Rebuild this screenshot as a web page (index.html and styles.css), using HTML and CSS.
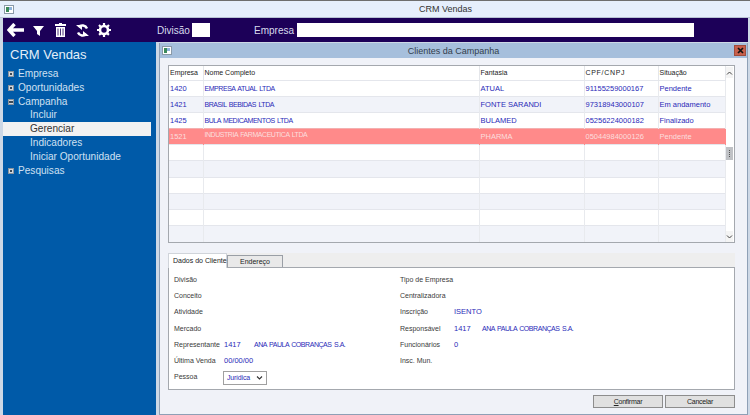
FILE: index.html
```html
<!DOCTYPE html>
<html lang="pt-BR">
<head>
<meta charset="utf-8">
<title>CRM Vendas</title>
<link rel="stylesheet" href="styles.css">
</head>
<body>
<div class="app">
  <header class="titlebar">
    <svg class="winicon" viewBox="0 0 10 9"><rect x=".5" y=".5" width="9" height="8" fill="#fff" stroke="#8a9aa8"/><rect x="2" y="2" width="3" height="5" fill="#3c8a5a"/><rect x="5" y="2" width="3" height="3" fill="#8fb4dc"/></svg>
    <span class="titlebar-text">CRM Vendas</span>
  </header>
  <div class="toolbar">
    <div class="tools">
      <svg class="tool-back" viewBox="0 0 17 14"><path d="M7.500 1 2 7l5.500 6M3 7h14" fill="none" stroke="#fff" stroke-width="3.400"/></svg>
      <svg class="tool-filter" viewBox="0 0 11 11"><path d="M0 1h11L7 6v5L4 9V6z" fill="#fff"/></svg>
      <svg class="tool-trash" viewBox="0 0 11 14"><path d="M4 0h3v1h4v2H0V1h4zM1 4h9v10H1z" fill="#fff"/><path d="M3 5.500v7M5.500 5.500v7M8 5.500v7" stroke="#1c0058" stroke-width=".8"/></svg>
      <svg class="tool-sync" viewBox="0 0 13 13"><path d="M11 4.500A5 4.500 0 0 0 2.500 3M2 8.500A5 4.500 0 0 0 10.500 10" fill="none" stroke="#fff" stroke-width="2.400"/><path d="M0 1h6v5zM13 12H7V7z" fill="#fff"/></svg>
      <svg class="tool-gear" viewBox="0 0 14 14"><circle cx="7" cy="7" r="4" fill="none" stroke="#fff" stroke-width="2.600"/><path d="M7 0v14M0 7h14M2 2l10 10M12 2 2 12" stroke="#fff" stroke-width="2.200" stroke-dasharray="2.400 9.200"/></svg>
    </div>
    <span class="tb-label tb-div">Divisão</span>
    <span class="tb-input tb-input-div"></span>
    <span class="tb-label tb-emp">Empresa</span>
    <span class="tb-input tb-input-emp"></span>
  </div>
  <div class="main">
    <nav class="sidebar">
      <h1 class="side-title">CRM Vendas</h1>
      <ul class="tree">
        <li class="node"><i class="box plus"></i>Empresa</li>
        <li class="node"><i class="box plus"></i>Oportunidades</li>
        <li class="node"><i class="box minus"></i>Campanha</li>
        <li class="leaf">Incluir</li>
        <li class="leaf active">Gerenciar</li>
        <li class="leaf">Indicadores</li>
        <li class="leaf">Iniciar Oportunidade</li>
        <li class="node"><i class="box plus"></i>Pesquisas</li>
      </ul>
    </nav>
    <section class="dialog">
      <header class="dlg-head">
        <svg class="winicon" viewBox="0 0 10 9"><rect x=".5" y=".5" width="9" height="8" fill="#fff" stroke="#8a9aa8"/><rect x="2" y="2" width="3" height="5" fill="#3c8a5a"/><rect x="5" y="2" width="3" height="3" fill="#8fb4dc"/></svg>
        <span class="dlg-title">Clientes da Campanha</span>
        <span class="dlg-close"><svg viewBox="0 0 7 7"><path d="M1 1l5 5M6 1 1 6" stroke="#111" stroke-width="1.700"/></svg></span>
      </header>
      <div class="dlg-body">
        <div class="grid-wrap">
          <table class="grid">
            <colgroup><col class="c1"><col class="c2"><col class="c3"><col class="c4"><col class="c5"></colgroup>
            <thead><tr><th>Empresa</th><th>Nome Completo</th><th>Fantasia</th><th class="wide">CPF/CNPJ</th><th>Situação</th></tr></thead>
            <tbody>
              <tr><td>1420</td><td class="caps">EMPRESA ATUAL LTDA</td><td>ATUAL</td><td>91155259000167</td><td>Pendente</td></tr>
              <tr><td>1421</td><td class="caps">BRASIL BEBIDAS LTDA</td><td>FONTE SARANDI</td><td>97318943000107</td><td>Em andamento</td></tr>
              <tr><td>1425</td><td class="caps">BULA MEDICAMENTOS LTDA</td><td>BULAMED</td><td>05256224000182</td><td>Finalizado</td></tr>
              <tr class="sel"><td>1521</td><td class="caps raised">INDUSTRIA FARMACEUTICA LTDA</td><td>PHARMA</td><td>05044984000126</td><td>Pendente</td></tr>
              <tr><td></td><td></td><td></td><td></td><td></td></tr>
              <tr><td></td><td></td><td></td><td></td><td></td></tr>
              <tr><td></td><td></td><td></td><td></td><td></td></tr>
              <tr><td></td><td></td><td></td><td></td><td></td></tr>
              <tr><td></td><td></td><td></td><td></td><td></td></tr>
              <tr><td></td><td></td><td></td><td></td><td></td></tr>
            </tbody>
          </table>
          <div class="scroll">
            <span class="sc-btn"><svg viewBox="0 0 7 4"><path d="M1 3.500 3.500 1 6 3.500" fill="none" stroke="#444"/></svg></span>
            <span class="sc-track"><span class="sc-thumb"></span></span>
            <span class="sc-btn"><svg viewBox="0 0 7 4"><path d="M1 .5 3.500 3 6 .5" fill="none" stroke="#444"/></svg></span>
          </div>
        </div>
        <div class="tabs">
          <span class="tab on">Dados do Cliente</span>
          <span class="tab">Endereço</span>
        </div>
        <div class="panel">
          <div class="col">
            <div class="f"><span>Divisão</span></div>
            <div class="f"><span>Conceito</span></div>
            <div class="f"><span>Atividade</span></div>
            <div class="f"><span>Mercado</span></div>
            <div class="f"><span class="lb-rep">Representante</span><b class="v-code">1417</b><b class="caps">ANA PAULA COBRANÇAS S.A.</b></div>
            <div class="f"><span class="lb-rep">Última Venda</span><b>00/00/00</b></div>
            <div class="f"><span class="lb-rep">Pessoa</span><span class="select">Jurídica<svg viewBox="0 0 7 4"><path d="M1 .5 3.500 3 6 .5" fill="none" stroke="#333" stroke-width="1.100"/></svg></span></div>
          </div>
          <div class="col">
            <div class="f"><span>Tipo de Empresa</span></div>
            <div class="f"><span>Centralizadora</span></div>
            <div class="f"><span class="lb-r">Inscrição</span><b>ISENTO</b></div>
            <div class="f"><span class="lb-r">Responsável</span><b class="v-code2">1417</b><b class="caps">ANA PAULA COBRANÇAS S.A.</b></div>
            <div class="f"><span class="lb-r">Funcionários</span><b>0</b></div>
            <div class="f"><span>Insc. Mun.</span></div>
          </div>
        </div>
        <div class="actions">
          <button class="btn" type="button"><u>C</u>onfirmar</button>
          <button class="btn" type="button">Cancelar</button>
        </div>
      </div>
    </section>
  </div>
</div>
</body>
</html>
```
FILE: styles.css
```css
* { box-sizing: border-box; }
html, body { margin: 0; padding: 0; }
body { width: 750px; height: 415px; overflow: hidden; background: #cdd8e6; font-family: "Liberation Sans", Arial, sans-serif; }
.app { width: 750px; height: 415px; display: flex; flex-direction: column; border-top: 1px solid #6e6e6e; padding: 0 2px 0 3px; }
.winicon { width: 10px; height: 9px; display: block; flex: none; }

.titlebar { height: 17px; margin: 0 -2px 0 -3px; padding: 0 0 0 4px; background: #e6effc; border-bottom: 1px solid #b8c4d4; display: flex; align-items: center; position: relative; }
.titlebar-text { position: absolute; left: 141px; right: 0; text-align: center; font-size: 9px; color: #333; }

.toolbar { height: 24px; background: #1c0058; display: flex; align-items: center; flex: none; }
.tools { display: flex; align-items: center; width: 154px; padding-left: 4px; flex: none; }
.tools svg { display: block; flex: none; }
.tool-back { width: 17px; height: 14px; margin-right: 9px; }
.tool-filter { width: 11px; height: 11px; margin-right: 11px; }
.tool-trash { width: 11px; height: 14px; margin-right: 10px; }
.tool-sync { width: 13px; height: 13px; margin-right: 8px; }
.tool-gear { width: 14px; height: 14px; }
.tb-label { color: #d8dcec; font-size: 10px; white-space: nowrap; }
.tb-div { width: 35px; }
.tb-input { background: #fff; height: 14px; display: block; flex: none; }
.tb-input-div { width: 18px; }
.tb-emp { margin-left: 44px; width: 43px; }
.tb-input-emp { width: 397px; }

.main { flex: 1; display: flex; min-height: 0; }
.sidebar { width: 153px; flex: none; background: #005aa8; color: #d9e6f4; }
.side-title { margin: 0; height: 25px; padding: 5px 0 0 7px; font-size: 13px; line-height: 16px; font-weight: 400; color: #e4eef8; }
.tree { list-style: none; margin: 0; padding: 0; font-size: 10.100px; line-height: 13.800px; }
.node { height: 13.800px; padding-left: 15px; position: relative; color: #cfe0f2; }
.leaf { height: 13.800px; padding-left: 27px; margin-right: 5px; color: #cfe0f2; }
.leaf.active { background: #f2f2f2; color: #333; }
.box { position: absolute; left: 5px; top: 4px; width: 6px; height: 6px; background: #d4d8de; border: 1px solid #88949f; }
.box.plus::before { content: ""; position: absolute; inset: 1px; background: #3b4a58; }
.box.minus::before { content: ""; position: absolute; left: 0; right: 0; top: 1px; height: 2px; background: #3b4a58; }

.dialog { flex: 1; margin: 1px 0 0 3px; border: 1px solid #8ea0b6; border-top: 0; background: #f0f2f8; display: flex; flex-direction: column; min-width: 0; }
.dlg-head { height: 15px; background: #a6bfdc; display: flex; align-items: center; padding: 0 1px 0 2px; position: relative; flex: none; }
.dlg-title { position: absolute; left: 0; right: 0; text-align: center; font-size: 9px; color: #33404c; }
.dlg-close { margin-left: auto; width: 12px; height: 11px; background: #c8604c; border: 1px solid #a04c3c; display: flex; align-items: center; justify-content: center; position: relative; }
.dlg-close svg { width: 7px; height: 7px; display: block; }

.dlg-body { flex: 1; padding: 7px 12px 0 8px; display: flex; flex-direction: column; min-height: 0; }
.grid-wrap { height: 178px; border: 1px solid #a4a8ae; background: #fff; display: flex; flex: none; overflow: hidden; }
.grid { width: 556px; border-collapse: collapse; table-layout: fixed; font-size: 7.500px; flex: none; align-self: flex-start; }
.c1 { width: 34px; } .c2 { width: 276px; } .c3 { width: 105px; } .c4 { width: 74px; } .c5 { width: 67px; }
.grid th { height: 14px; font-weight: 400; font-size: 7px; color: #222; text-align: left; padding: 0 1px; background: #fff; border-right: 1px solid #e4e6ea; white-space: nowrap; }
.grid th.wide { letter-spacing: .7px; }
.grid td { height: 16.200px; padding: 0 1px; color: #2a2ab8; border-right: 1px solid #e8eaee; border-top: 1px solid #e4e6ec; white-space: nowrap; overflow: hidden; }
.grid tbody tr:nth-child(even) td { background: #f1f3f9; }
.grid tbody tr.sel td { background: #ff8a8a; color: #fbdede; border-right-color: #ff8a8a; border-top-color: #f3b0b0; }
.grid td.raised { vertical-align: top; line-height: 10px; padding-top: 1px; border-left: 1px solid #a08a8a; }
.grid td.caps, .f .caps { font-size: 7px; letter-spacing: -.45px; word-spacing: .9px; }

.scroll { width: 11px; margin-left: auto; display: flex; flex-direction: column; margin-top: 1px; margin-right: 1px; background: #fff; }
.sc-btn { height: 11px; background: #f4f4f4; display: flex; align-items: center; justify-content: center; flex: none; }
.sc-btn svg { width: 7px; height: 4px; display: block; }
.sc-track { flex: 1; padding-top: 69px; }
.sc-thumb { display: block; height: 13px; border: 3px solid #bfc1c5; background: repeating-linear-gradient(#555 0 1px, #bfc1c5 1px 2px); }

.tabs { display: flex; margin-top: 10px; height: 14px; background: #eeeeee; flex: none; align-items: flex-end; position: relative; z-index: 1; }
.tab { font-size: 7px; color: #222; padding: 0 4px; height: 12px; line-height: 12px; border: 1px solid #9a9fa6; border-bottom: 0; background: #e9e9e9; white-space: nowrap; }
.tab.on { background: #fff; height: 15px; margin-bottom: -1px; line-height: 13px; border-color: #d0d4da; border-bottom: 0; width: 59px; }
.tab:not(.on) { width: 56px; text-align: center; }

.panel { height: 123px; border: 1px solid #a4a8ae; background: #fff; padding: 3px 0 0 5px; display: grid; grid-template-columns: 226px 1fr; font-size: 7px; color: #3a3a3a; flex: none; }
.col { display: flex; flex-direction: column; }
.f { height: 16.300px; display: flex; align-items: center; white-space: nowrap; }
.f b { font-weight: 400; color: #2a2ab8; font-size: 7.500px; }
.lb-rep { width: 50px; flex: none; }
.v-code { width: 30px; }
.lb-r { width: 54px; flex: none; }
.v-code2 { width: 28px; }
.select { margin: 2px 0 0 -1px; width: 44px; height: 14px; border: 1px solid #a0a0a0; display: flex; align-items: center; justify-content: space-between; padding: 0 3px; color: #2a2ab8; background: #fff; letter-spacing: -.2px; }
.select svg { width: 7px; height: 4px; display: block; }

.actions { display: flex; justify-content: flex-end; gap: 2px; margin-top: 5px; }
.btn { width: 70px; height: 13px; padding: 0; background: #e0e0e0; border: 1px solid #8d8d8d; font-family: inherit; font-size: 7px; letter-spacing: -.25px; line-height: 11px; color: #222; }
```
